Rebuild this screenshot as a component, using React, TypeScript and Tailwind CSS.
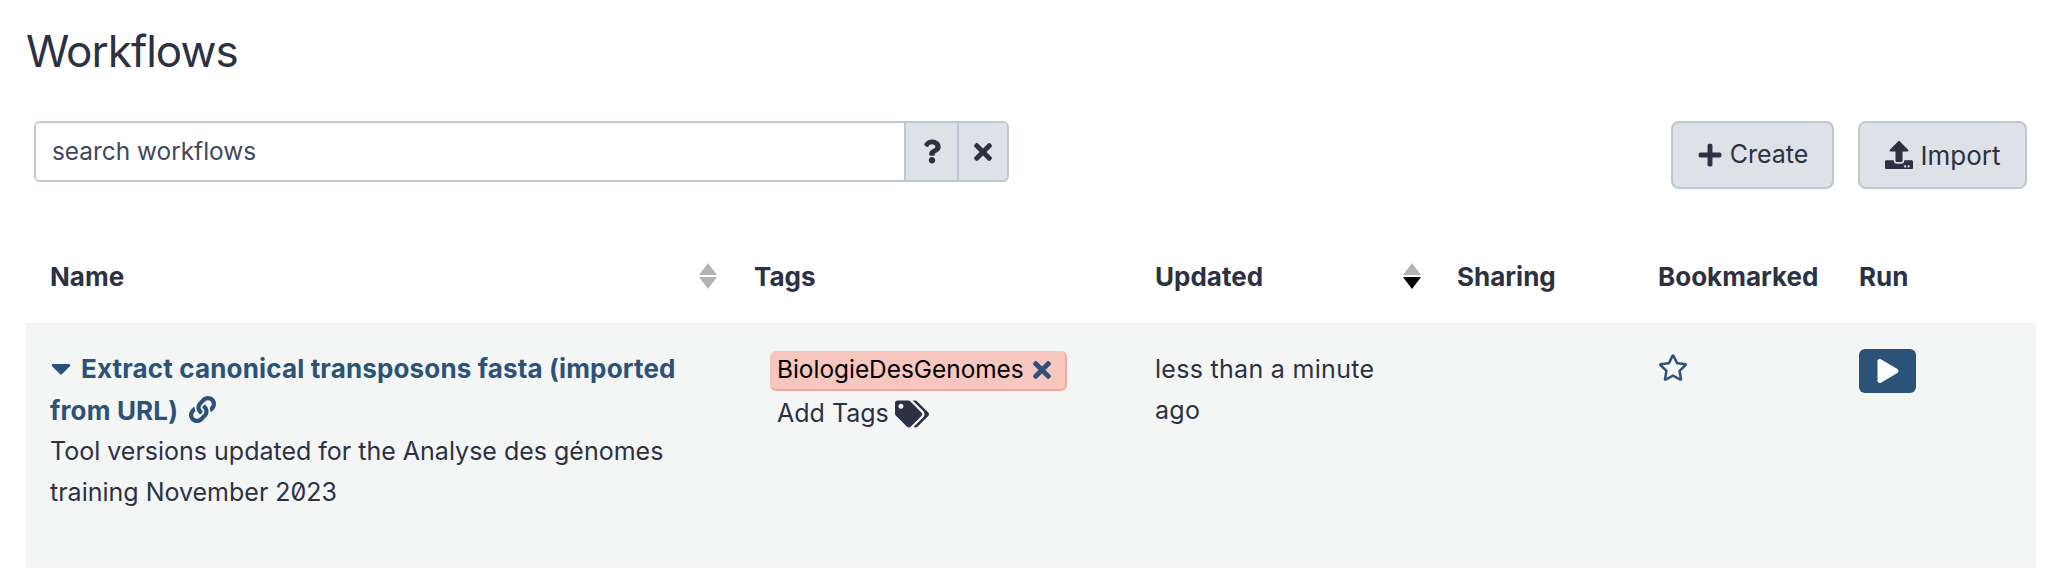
import { FaCaretDown, FaLink, FaPlay, FaPlus, FaQuestion, FaRegStar, FaTags, FaTimes, FaUpload } from 'react-icons/fa'

function SortArrows({ active }: { active?: boolean }) {
  return (
    <svg viewBox="0 0 18 26" className="w-[18px] h-[26px]">
      <path d="M9 0 L18 12 H0 Z" fill="#b3b3b3" />
      <path d="M0 14 H18 L9 26 Z" fill={active ? '#000000' : '#b3b3b3'} />
    </svg>
  )
}

function App() {
  return (
    <div className="w-[2052px] h-[588px] bg-white text-[#2c3143] font-['Inter','Liberation_Sans',sans-serif] overflow-hidden">
      <div className="pl-[26px] pr-4">
        <h1 className="pt-[24px] text-[44px] leading-[54px] font-normal tracking-[-1px]">Workflows</h1>

        <div className="mt-[43px] pl-[8px] pr-[9px] flex justify-between items-start">
          <div className="flex w-[975px] h-[61px] rounded-[6px] border-2 border-[#bfc6d3] overflow-hidden">
            <div className="flex-1 bg-white pl-[16px] flex items-center text-[24.4px] text-[#41485d]">search workflows</div>
            <div className="w-[53px] bg-[#dee1e6] border-l-2 border-[#bfc6d3] flex items-center justify-center">
              <FaQuestion className="w-[18px] h-[25px]" />
            </div>
            <div className="w-[50px] bg-[#dee1e6] border-l-2 border-[#bfc6d3] flex items-center justify-center">
              <FaTimes className="h-[26px] w-[18px]" />
            </div>
          </div>

          <div className="flex gap-[24px]">
            <div className="w-[163px] h-[68px] rounded-[8px] border-2 border-[#bfc6d3] bg-[#dee1e6] flex items-center justify-center gap-[7px] text-[25px]">
              <FaPlus className="w-[26px] h-[26px]" />
              Create
            </div>
            <div className="w-[169px] h-[68px] rounded-[8px] border-2 border-[#bfc6d3] bg-[#dee1e6] flex items-center justify-center gap-[8px] text-[26px]">
              <FaUpload className="w-[28px] h-[30px]" />
              Import
            </div>
          </div>
        </div>

        <table className="mt-[50px] w-[2010px] table-fixed">
          <colgroup>
            <col className="w-[704px]" />
            <col className="w-[401px]" />
            <col className="w-[302px]" />
            <col className="w-[201px]" />
            <col className="w-[201px]" />
            <col className="w-[201px]" />
          </colgroup>
          <thead>
            <tr className="h-[84px] text-[26px] font-bold text-left">
              <th className="pl-[24px] pr-[13px] pb-[10px]">
                <div className="flex items-center justify-between">
                  Name
                  <SortArrows />
                </div>
              </th>
              <th className="pl-[24px] pb-[10px] font-bold">Tags</th>
              <th className="pl-[24px] pr-[12px] pb-[10px]">
                <div className="flex items-center justify-between">
                  Updated
                  <SortArrows active />
                </div>
              </th>
              <th className="pl-[24px] pb-[10px]">Sharing</th>
              <th className="pl-[24px] pb-[10px]">Bookmarked</th>
              <th className="pl-[24px] pb-[10px]">Run</th>
            </tr>
          </thead>
          <tbody>
            <tr className="h-[245px] bg-[#f4f6f6] align-top text-[25px] leading-[41px]">
              <td className="pl-[24px] pr-[24px] pt-[25px] slashed-zero">
                <a className="font-bold text-[26px] tracking-[0.15px] text-[#2c5278]">
                  <FaCaretDown className="inline w-[30px] h-[32px] -ml-[4px] mr-[5px] align-[-6px]" />
                  Extract canonical transposons fasta (imported from URL)
                  <FaLink className="inline w-[27px] h-[27px] ml-[11px] align-[-3px]" />
                </a>
                <div className="-mt-[1px]">Tool versions updated for the Analyse des génomes training November 2023</div>
              </td>
              <td className="pl-[40px] pt-[26px]">
                <div className="inline-flex items-center h-[40px] w-[297px] pl-[7px] rounded-[6px] bg-[#f7c6be] border-r-2 border-b-2 border-[#f5a99c] text-black text-[24.4px]">
                  BiologieDesGenomes
                  <FaTimes className="w-[18px] h-[26px] ml-[9px] text-[#2c5278]" />
                </div>
                <div className="pl-[7px] flex items-center h-[46px] gap-[6px]">
                  Add Tags
                  <FaTags className="w-[34px] h-[30px]" />
                </div>
              </td>
              <td className="pl-[24px] pr-[24px] pt-[26px] tracking-[0.3px]">less than a minute ago</td>
              <td />
              <td className="pl-[24px] pt-[31px]">
                <FaRegStar className="w-[30px] h-[27px] text-[#2c5278]" />
              </td>
              <td className="pl-[24px] pt-[26px]">
                <div className="w-[57px] h-[44px] rounded-[6px] bg-[#2c5278] flex items-center justify-center">
                  <FaPlay className="w-[22px] h-[24px] text-white" />
                </div>
              </td>
            </tr>
          </tbody>
        </table>
      </div>
    </div>
  )
}

export default App
